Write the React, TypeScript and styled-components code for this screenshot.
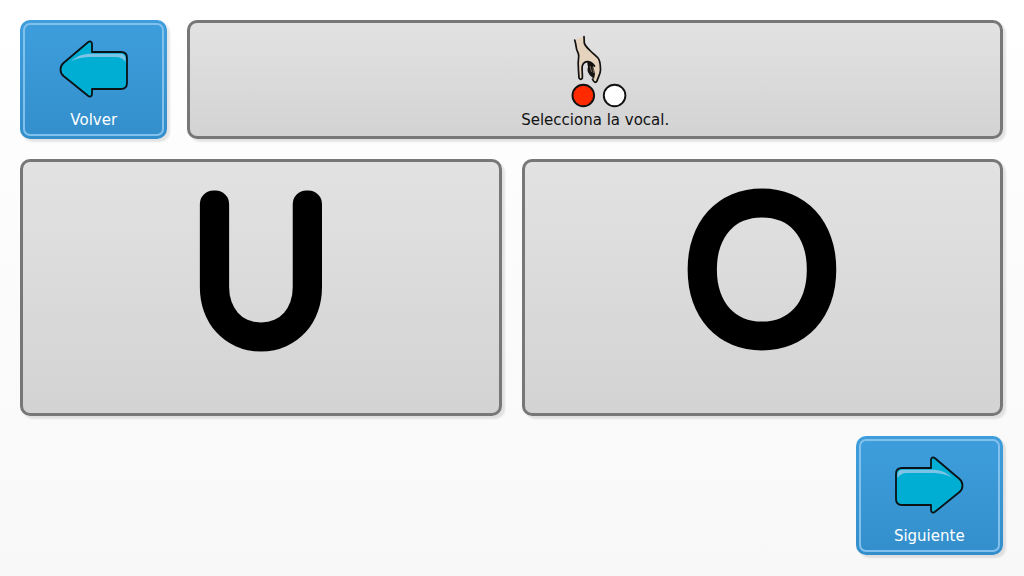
import React from 'react';
import styled, { createGlobalStyle, css } from 'styled-components';

const GlobalStyle = createGlobalStyle`
  *, *::before, *::after { box-sizing: border-box; }
  body {
    margin: 0;
    font-family: 'DejaVu Sans', 'Open Sans', sans-serif;
    font-size: 15px;
    line-height: 20px;
  }
`;

const Board = styled.main`
  min-height: 100vh;
  padding: 20px 21px 21px 20px;
  display: grid;
  grid-template-rows: 119px minmax(240px, 1fr) 119px;
  gap: 20px;
  background: linear-gradient(#fff, #f8f8f8);
`;

const Row = styled.div<{ $end?: boolean }>`
  display: flex;
  gap: 20px;
  justify-content: ${({ $end }) => ($end ? 'flex-end' : 'flex-start')};
`;

const cell = css`
  display: flex;
  flex-direction: column;
  align-items: center;
  border-radius: 10px;
`;

const panel = css`
  ${cell}
  flex: 1 1 0;
  min-width: 0;
  border: 3px solid #777;
  background: linear-gradient(#e2e2e2, #d3d3d3);
  box-shadow: 3px 3px 2px rgba(0, 0, 0, 0.1);
  color: #111;
`;

const Prompt = styled.section`
  ${panel}
  padding-top: 7px;
`;

const Choice = styled.button`
  ${panel}
  padding: 0;
  font: inherit;
  cursor: pointer;
`;

const NavButton = styled.button`
  ${cell}
  width: 15%;
  min-width: 120px;
  padding: 17px 0 0;
  border: 3px solid transparent;
  background: linear-gradient(#3e9edd, #338fcb) border-box;
  box-shadow: inset 0 0 0 2px #83c0eb, 3px 3px 2px rgba(0, 0, 0, 0.1);
  color: #fff;
  font: inherit;
  cursor: pointer;
`;

const Caption = styled.p`
  margin: 0;
`;

const NavLabel = styled.span`
  margin-top: 12px;
`;

const LetterCanvas = styled.svg`
  overflow: visible;
`;

const Letter = styled.text`
  font-family: Lato, sans-serif;
  font-weight: 100;
  font-size: 188px;
  text-anchor: middle;
  fill: #000;
  stroke: #000;
  stroke-width: 27px;
  stroke-linejoin: round;
`;

function Arrow({ right = false }: { right?: boolean }) {
  return (
    <svg width="70" height="58" viewBox="0 0 70 58" aria-hidden="true">
      <g transform={right ? 'translate(70 0) scale(-1 1)' : undefined}>
        <path
          d="M33 12V4C33 1.300 31 .8 29 2.300L4.500 23C.5 26.500.5 32.500 4.500 36L29 55.800C31 57.300 33 56.500 33 54V49H62Q68 49 68 43V18Q68 12 62 12Z"
          fill="#00aed3"
          stroke="#0a1216"
          strokeWidth="1.800"
          strokeLinejoin="round"
        />
        <path
          d="M12 21.500C18 16 24 13.800 32 13.800H61Q66.500 13.800 66.500 19V22Q63 17 57 17H33C25 17 19 18 12 21.500Z"
          fill="#7cc3e6"
        />
      </g>
    </svg>
  );
}

function HandPicking() {
  return (
    <svg width="80" height="80" viewBox="-5 0 80 80" aria-hidden="true">
      <path
        d="M14.700 10C16 14 16 17 16.700 19.500C17.500 22 19 23.500 18.700 26C18 31 18 36 18.500 41L19 48Q20.800 50.500 22.300 48.300C22.800 44 21.500 39 22.300 36C23.200 33 25 31.500 27.500 31.500L34 38L33 48C33.500 52 35.500 53 37 51C38 47 40.500 44 40.500 40C40.300 35 40.500 31 38 28C35 25 32.500 23 30 20.500C27 17.500 25 16 24.300 13L24 6.500Z"
        fill="#e6d3bd"
      />
      <path
        d="M27 31.500C29 31 32 32 33 35L35 44L34 49C31 46 29 45 28.500 43C27 41 27.500 39 28 37C27.500 35 27.500 33 27 31.500Z"
        fill="#15120f"
      />
      <path d="M30 36L31.500 42M33 37L33.500 43" stroke="#a6937f" strokeWidth=".7" />
      <path
        d="M14.700 10C16 14 16 17 16.700 19.500C17.500 22 19 23.500 18.700 26C18 31 18 36 18.500 41L19 48Q20.800 50.500 22.300 48.300C22.800 44 21.500 39 22.300 36C23.200 33 25 31.500 28 31.700C31 32 33 34 34.500 36M24 6.500L24.300 13C25 16 27 17.500 30 20.500C32.500 23 35 25 38 28C40.500 31 40.300 35 40.500 40C40.500 44 38 47 37 51C35.500 53.500 33.500 52 32.500 49"
        fill="none"
        stroke="#111"
        strokeWidth="1.700"
        strokeLinecap="round"
        strokeLinejoin="round"
      />
      <circle cx="23.300" cy="65.500" r="10.800" fill="#ff2a00" stroke="#111" strokeWidth="1.900" />
      <circle cx="54.600" cy="65.500" r="10.800" fill="#fff" stroke="#111" strokeWidth="1.900" />
    </svg>
  );
}

function VowelChoice({ vowel }: { vowel: string }) {
  return (
    <Choice type="button">
      <LetterCanvas width="220" height="230" viewBox="0 0 220 230">
        <Letter x="110" y="174">{vowel}</Letter>
      </LetterCanvas>
    </Choice>
  );
}

export default function App() {
  return (
    <>
      <GlobalStyle />
      <Board>
        <Row>
          <NavButton type="button">
            <Arrow />
            <NavLabel>Volver</NavLabel>
          </NavButton>
          <Prompt>
            <HandPicking />
            <Caption>Selecciona la vocal.</Caption>
          </Prompt>
        </Row>
        <Row>
          <VowelChoice vowel="U" />
          <VowelChoice vowel="O" />
        </Row>
        <Row $end>
          <NavButton type="button">
            <Arrow right />
            <NavLabel>Siguiente</NavLabel>
          </NavButton>
        </Row>
      </Board>
    </>
  );
}
